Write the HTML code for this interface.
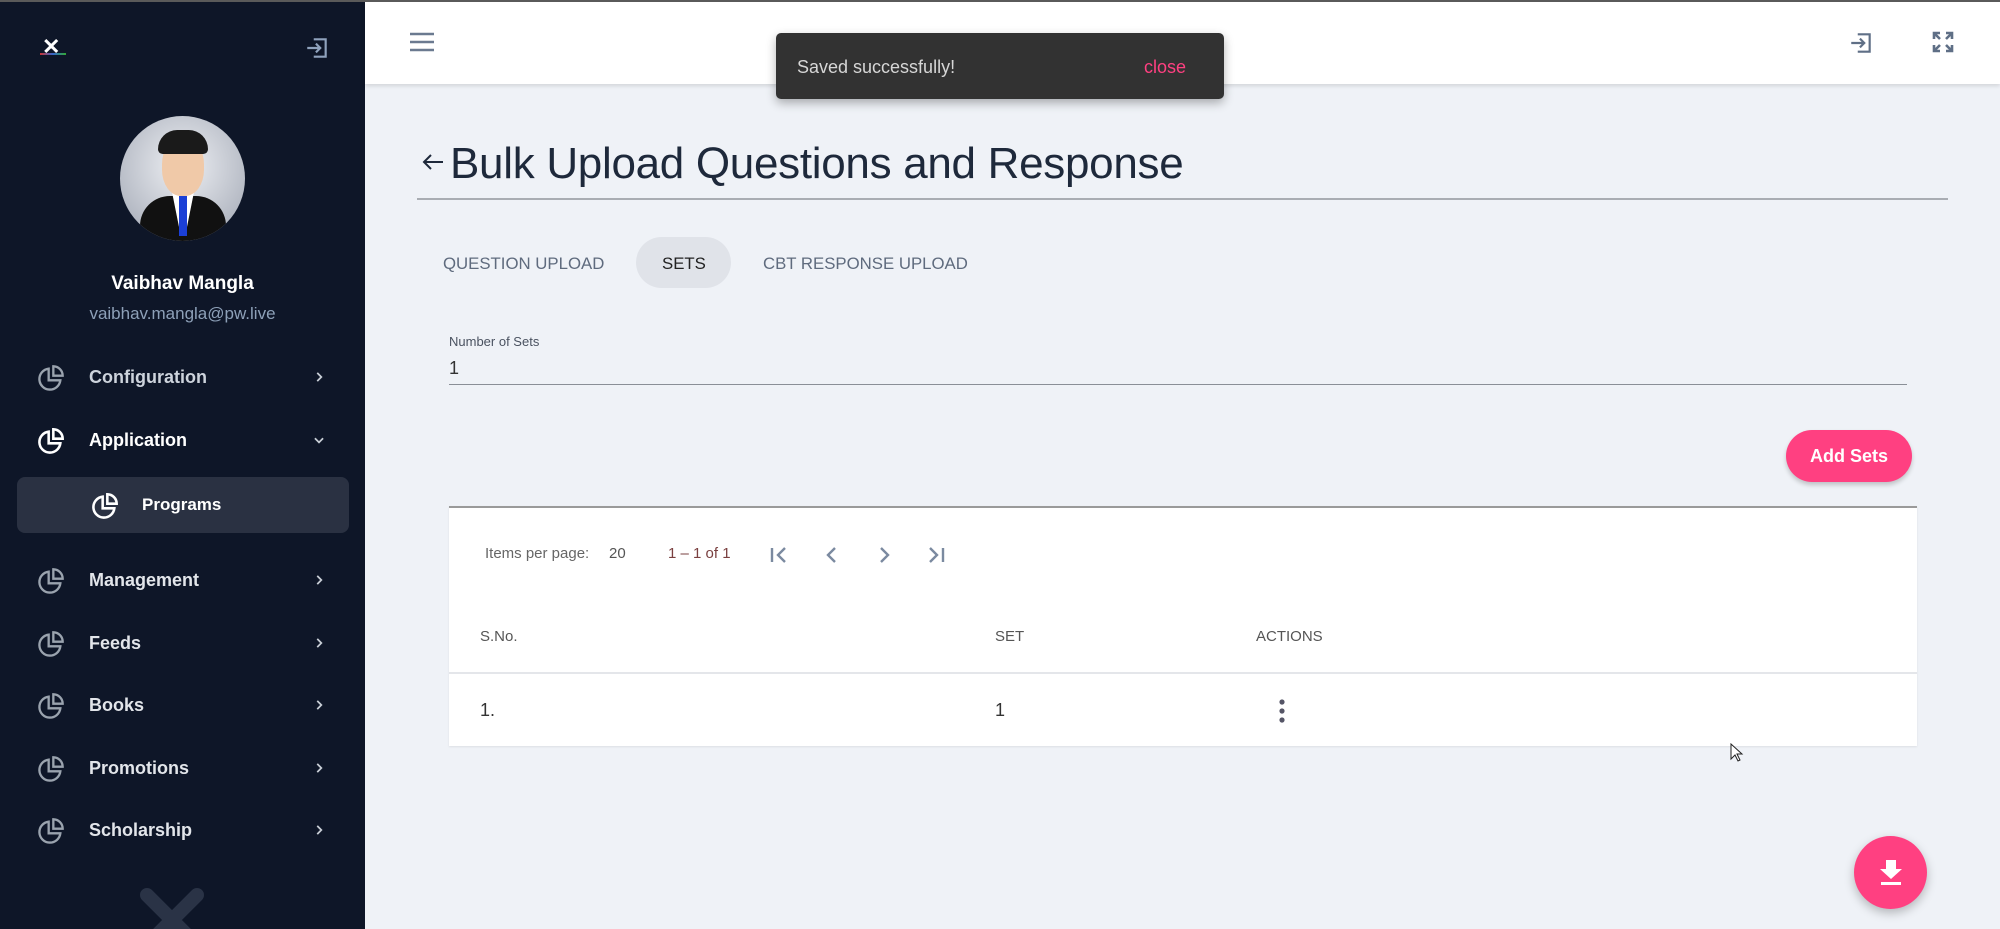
<!DOCTYPE html>
<html><head><meta charset="utf-8"><style>
*{box-sizing:border-box;margin:0;padding:0}
body{width:2000px;height:929px;overflow:hidden;background:#eff2f7;font-family:"Liberation Sans",sans-serif;position:relative}
.abs{position:absolute}
#topline{left:0;top:0;width:2000px;height:2px;background:#5a5a5a;z-index:5}
#side{left:0;top:0;width:365px;height:929px;background:#0e1628;overflow:hidden}
.mi{position:absolute;left:0;width:365px;height:40px;color:#e2e5ea;font-size:18px;font-weight:bold}
.mi svg.ic{position:absolute;left:37px;top:7px}
.mi span{position:absolute;left:89px;top:10px}
.mi .ch{position:absolute;left:312px;top:13px}
#hdr{left:365px;top:0;width:1635px;height:84px;background:#fff;box-shadow:0 2px 4px rgba(0,0,0,.12)}
.tab{position:absolute;top:254px;font-size:16.8px;color:#5f6b7e;font-weight:500}
</style></head><body>
<div class="abs" id="topline"></div>
<div class="abs" id="side">
  <div class="abs" style="left:42px;top:34px;color:#fff;font-size:22px;font-weight:bold">✕</div>
  <div class="abs" style="left:40px;top:53px;width:26px;height:2px;background:linear-gradient(90deg,#c33,#36c,#3a3)"></div>
  <svg class="abs" style="left:304px;top:35px" width="26" height="26" viewBox="0 0 24 24" fill="none" stroke="#8fa2bd" stroke-width="2"><path d="M9 4h11v16H9M3 12h12M11 8l4 4-4 4"/></svg>
  <div class="abs" style="left:120px;top:116px;width:125px;height:125px;border-radius:50%;background:radial-gradient(circle at 50% 40%,#eef0f4,#9da3b0);overflow:hidden">
    <div class="abs" style="left:20px;top:80px;width:86px;height:60px;border-radius:30px 30px 0 0;background:#111"></div>
    <div class="abs" style="left:52px;top:76px;width:22px;height:44px;background:#fff;clip-path:polygon(0 0,100% 0,60% 100%,40% 100%)"></div>
    <div class="abs" style="left:59px;top:80px;width:8px;height:40px;background:#1b3fd6"></div>
    <div class="abs" style="left:42px;top:22px;width:42px;height:58px;border-radius:45%;background:#f0c9a8"></div>
    <div class="abs" style="left:38px;top:14px;width:50px;height:24px;border-radius:24px 24px 6px 6px;background:#1a1a1a"></div>
  </div>
  <div class="abs" style="left:0;width:365px;top:273px;text-align:center;color:#fff;font-size:19px;font-weight:bold">Vaibhav Mangla</div>
  <div class="abs" style="left:0;width:365px;top:304px;text-align:center;color:#8da0b8;font-size:17px">vaibhav.mangla@pw.live</div>

  <div class="abs" style="left:17px;top:477px;width:332px;height:56px;border-radius:8px;background:#2a3142"></div>

  <div class="mi" style="top:357px;color:#cdd3dc"><svg class="ic" width="28" height="28" viewBox="0 0 24 24" fill="none" stroke="#9aa3ae" stroke-width="2"><path d="M10 4a9 9 0 1 0 10 10H10z"/><path d="M14 2v8h8a8 8 0 0 0-8-8z"/></svg><span>Configuration</span><svg class="ch" width="14" height="14" viewBox="0 0 24 24" fill="none" stroke="#c8ced6" stroke-width="3"><path d="M9 5l7 7-7 7"/></svg></div>
  <div class="mi" style="top:420px;color:#fff"><svg class="ic" width="28" height="28" viewBox="0 0 24 24" fill="none" stroke="#fff" stroke-width="2.2"><path d="M10 4a9 9 0 1 0 10 10H10z"/><path d="M14 2v8h8a8 8 0 0 0-8-8z"/></svg><span>Application</span><svg class="ch" width="14" height="14" viewBox="0 0 24 24" fill="none" stroke="#c8ced6" stroke-width="3"><path d="M5 9l7 7 7-7"/></svg></div>
  <div class="mi" style="top:485px;color:#fff"><svg class="ic" style="left:91px" width="28" height="28" viewBox="0 0 24 24" fill="none" stroke="#fff" stroke-width="2.2"><path d="M10 4a9 9 0 1 0 10 10H10z"/><path d="M14 2v8h8a8 8 0 0 0-8-8z"/></svg><span style="left:142px;font-size:17px">Programs</span></div>
  <div class="mi" style="top:560px"><svg class="ic" width="28" height="28" viewBox="0 0 24 24" fill="none" stroke="#9aa3ae" stroke-width="2"><path d="M10 4a9 9 0 1 0 10 10H10z"/><path d="M14 2v8h8a8 8 0 0 0-8-8z"/></svg><span>Management</span><svg class="ch" width="14" height="14" viewBox="0 0 24 24" fill="none" stroke="#c8ced6" stroke-width="3"><path d="M9 5l7 7-7 7"/></svg></div>
  <div class="mi" style="top:623px"><svg class="ic" width="28" height="28" viewBox="0 0 24 24" fill="none" stroke="#9aa3ae" stroke-width="2"><path d="M10 4a9 9 0 1 0 10 10H10z"/><path d="M14 2v8h8a8 8 0 0 0-8-8z"/></svg><span>Feeds</span><svg class="ch" width="14" height="14" viewBox="0 0 24 24" fill="none" stroke="#c8ced6" stroke-width="3"><path d="M9 5l7 7-7 7"/></svg></div>
  <div class="mi" style="top:685px"><svg class="ic" width="28" height="28" viewBox="0 0 24 24" fill="none" stroke="#9aa3ae" stroke-width="2"><path d="M10 4a9 9 0 1 0 10 10H10z"/><path d="M14 2v8h8a8 8 0 0 0-8-8z"/></svg><span>Books</span><svg class="ch" width="14" height="14" viewBox="0 0 24 24" fill="none" stroke="#c8ced6" stroke-width="3"><path d="M9 5l7 7-7 7"/></svg></div>
  <div class="mi" style="top:748px"><svg class="ic" width="28" height="28" viewBox="0 0 24 24" fill="none" stroke="#9aa3ae" stroke-width="2"><path d="M10 4a9 9 0 1 0 10 10H10z"/><path d="M14 2v8h8a8 8 0 0 0-8-8z"/></svg><span>Promotions</span><svg class="ch" width="14" height="14" viewBox="0 0 24 24" fill="none" stroke="#c8ced6" stroke-width="3"><path d="M9 5l7 7-7 7"/></svg></div>
  <div class="mi" style="top:810px"><svg class="ic" width="28" height="28" viewBox="0 0 24 24" fill="none" stroke="#9aa3ae" stroke-width="2"><path d="M10 4a9 9 0 1 0 10 10H10z"/><path d="M14 2v8h8a8 8 0 0 0-8-8z"/></svg><span>Scholarship</span><svg class="ch" width="14" height="14" viewBox="0 0 24 24" fill="none" stroke="#c8ced6" stroke-width="3"><path d="M9 5l7 7-7 7"/></svg></div>
  <svg class="abs" style="left:135px;top:885px" width="80" height="44" viewBox="0 0 80 44"><path d="M12 10L62 60M62 10L12 60" stroke="#2a3346" stroke-width="14" stroke-linecap="round"/></svg>
</div>

<div class="abs" id="hdr">
  <svg class="abs" style="left:44px;top:30px" width="26" height="24" viewBox="0 0 26 24"><path d="M1 4h24M1 12h24M1 20h24" stroke="#6b7a90" stroke-width="2.6"/></svg>
  <svg class="abs" style="left:1483px;top:30px" width="26" height="26" viewBox="0 0 24 24" fill="none" stroke="#5f6f86" stroke-width="2"><path d="M9 4h11v16H9M3 12h12M11 8l4 4-4 4"/></svg>
  <svg class="abs" style="left:1566px;top:30px" width="24" height="24" viewBox="0 0 24 24" fill="none" stroke="#5f6f86" stroke-width="2.6"><path d="M3 9V3h6M3 3l6 6M21 9V3h-6M21 3l-6 6M3 15v6h6M3 21l6-6M21 15v6h-6M21 21l-6-6"/></svg>
</div>

<div class="abs" style="left:776px;top:33px;width:448px;height:66px;background:#323232;border-radius:5px;box-shadow:0 4px 10px rgba(0,0,0,.3);z-index:6">
  <div class="abs" style="left:21px;top:24px;color:#d6d6d6;font-size:18px">Saved successfully!</div>
  <div class="abs" style="left:368px;top:24px;color:#ff4081;font-size:18px;font-weight:500">close</div>
</div>

<svg class="abs" style="left:421px;top:150px" width="24" height="24" viewBox="0 0 24 24" fill="none" stroke="#1e293b" stroke-width="2"><path d="M22 12H3M10 5l-7 7 7 7"/></svg>
<div class="abs" style="left:450px;top:139px;font-size:44px;color:#1e293b;letter-spacing:-0.3px">Bulk Upload Questions and Response</div>
<div class="abs" style="left:417px;top:198px;width:1531px;height:2px;background:#a9adb3"></div>

<div class="abs" style="left:636px;top:237px;width:95px;height:51px;border-radius:26px;background:#e0e3e9"></div>
<div class="tab" style="left:443px">QUESTION UPLOAD</div>
<div class="tab" style="left:662px;color:#222">SETS</div>
<div class="tab" style="left:763px">CBT RESPONSE UPLOAD</div>

<div class="abs" style="left:449px;top:334px;font-size:13px;color:#4a5260">Number of Sets</div>
<div class="abs" style="left:449px;top:358px;font-size:18px;color:#333">1</div>
<div class="abs" style="left:449px;top:384px;width:1458px;height:1px;background:#8a8f97"></div>

<div class="abs" style="left:1786px;top:430px;width:126px;height:52px;border-radius:26px;background:#ff4081;box-shadow:0 3px 5px rgba(0,0,0,.2);color:#fff;font-weight:bold;font-size:18px;text-align:center;line-height:52px">Add Sets</div>

<div class="abs" style="left:449px;top:506px;width:1468px;height:240px;background:#fff;border-top:2px solid #9a9a9a;box-shadow:0 1px 2px rgba(0,0,0,.08)">
  <div class="abs" style="left:36px;top:37px;font-size:15px;color:#666">Items per page:</div>
  <div class="abs" style="left:160px;top:37px;font-size:15px;color:#555">20</div>
  <div class="abs" style="left:219px;top:37px;font-size:15px;color:#7a4040">1 – 1 of 1</div>
  <svg class="abs" style="left:318px;top:35px" width="24" height="24" viewBox="0 0 24 24" fill="none" stroke="#7b8aa0" stroke-width="2.4"><path d="M5 5v14M18 5l-7 7 7 7"/></svg>
  <svg class="abs" style="left:371px;top:35px" width="24" height="24" viewBox="0 0 24 24" fill="none" stroke="#7b8aa0" stroke-width="2.4"><path d="M15 5l-7 7 7 7"/></svg>
  <svg class="abs" style="left:423px;top:35px" width="24" height="24" viewBox="0 0 24 24" fill="none" stroke="#7b8aa0" stroke-width="2.4"><path d="M9 5l7 7-7 7"/></svg>
  <svg class="abs" style="left:475px;top:35px" width="24" height="24" viewBox="0 0 24 24" fill="none" stroke="#7b8aa0" stroke-width="2.4"><path d="M6 5l7 7-7 7M19 5v14"/></svg>
  <div class="abs" style="left:31px;top:120px;font-size:15px;color:#555">S.No.</div>
  <div class="abs" style="left:546px;top:120px;font-size:15px;color:#555">SET</div>
  <div class="abs" style="left:807px;top:120px;font-size:15px;color:#555">ACTIONS</div>
  <div class="abs" style="left:0;top:164px;width:1468px;height:2px;background:#e4e6ea"></div>
  <div class="abs" style="left:31px;top:192px;font-size:18px;color:#333">1.</div>
  <div class="abs" style="left:546px;top:192px;font-size:18px;color:#333">1</div>
  <svg class="abs" style="left:828px;top:190px" width="10" height="26" viewBox="0 0 10 26"><circle cx="5" cy="4" r="2.6" fill="#556"/><circle cx="5" cy="13" r="2.6" fill="#556"/><circle cx="5" cy="22" r="2.6" fill="#556"/></svg>
</div>

<svg class="abs" style="left:1730px;top:743px" width="14" height="20" viewBox="0 0 14 20"><path d="M1 1v15l4-4 3 6 2-1-3-6h5z" fill="#fff" stroke="#222" stroke-width="1"/></svg>

<div class="abs" style="left:1854px;top:836px;width:73px;height:73px;border-radius:50%;background:#ff4081;box-shadow:0 4px 10px rgba(0,0,0,.25)">
  <svg class="abs" style="left:24px;top:22px" width="26" height="28" viewBox="0 0 26 28"><path d="M8 2h10v9h6L13 21 2 11h6z" fill="#fff"/><rect x="3" y="24" width="20" height="3" fill="#fff"/></svg>
</div>
</body></html>
